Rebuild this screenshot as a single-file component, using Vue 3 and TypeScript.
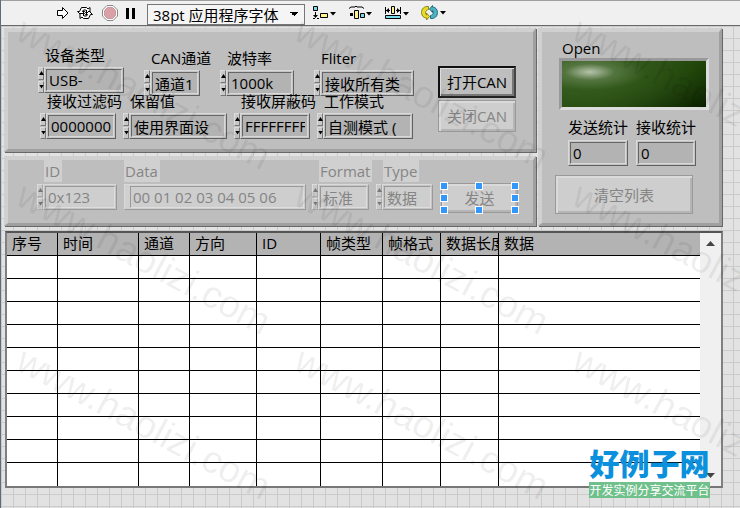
<script setup lang="ts">
interface Field {
  id: string
  label: string
  value: string
}

const deviceFields: Field[] = [
  { id: 'device', label: '设备类型', value: 'USB-' },
  { id: 'channel', label: 'CAN通道', value: '通道1' },
  { id: 'baud', label: '波特率', value: '1000k' },
  { id: 'filter', label: 'Fliter', value: '接收所有类' },
]

const filterFields: Field[] = [
  { id: 'code', label: '接收过滤码', value: '00000000' },
  { id: 'reserved', label: '保留值', value: '使用界面设' },
  { id: 'mask', label: '接收屏蔽码', value: 'FFFFFFFF' },
  { id: 'mode', label: '工作模式', value: '自测模式 (' },
]

const sendFields: Field[] = [
  { id: 'frame', label: 'ID', value: '0x123' },
  { id: 'data', label: 'Data', value: '00 01 02 03 04 05 06' },
  { id: 'format', label: 'Format', value: '标准' },
  { id: 'type', label: 'Type', value: '数据' },
]

const columns: string[] = ['序号', '时间', '通道', '方向', 'ID', '帧类型', '帧格式', '数据长度', '数据']
const handles: string[] = ['nw', 'n', 'ne', 'w', 'e', 'sw', 's', 'se']
const rowCount = 10
const markCount = 9
</script>

<template>
  <div class="window">
    <header class="toolbar">
      <button class="tool run" type="button" aria-label="Run">
        <svg width="14" height="14" viewBox="0 0 14 14"><path d="M1.5 4.5h5v-3l5.500 5.500-5.500 5.500v-3h-5z" fill="#fff" stroke="#000" /></svg>
      </button>
      <button class="tool loop" type="button" aria-label="Run continuously">
        <svg width="16" height="14" viewBox="0 0 16 14" fill="#fff" stroke="#000" stroke-linejoin="round">
          <path d="M4.500 1.500h5l1.500 1.500 2-1.500v5H8.500L10 5 9 4H6.500L5.500 5.500H7.500L4 9 .5 5.500H2.500z" />
          <path d="M11.500 12.500h-5L5 11 3 12.500v-5h4.500L6 9l1 1h2.500l1-1.500H8.500L12 5l3.500 3.500H13.500z" />
        </svg>
      </button>
      <button class="tool stop" type="button" aria-label="Abort">
        <svg width="16" height="16" viewBox="0 0 16 16">
          <path d="M5 .5h6L15.500 5v6L11 15.500H5L.5 11V5z" fill="#fff" stroke="#888" />
          <path d="M5.500 2.500h5l3 3v5l-3 3h-5l-3-3v-5z" fill="#d9a0a5" stroke="#cb999d" />
        </svg>
      </button>
      <button class="tool pause" type="button" aria-label="Pause">
        <svg width="9" height="11" viewBox="0 0 9 11"><path d="M0 0h3v11H0zM6 0h3v11H6z" /></svg>
      </button>
      <select class="font-select" aria-label="字体"><option>38pt 应用程序字体</option></select>
      <button class="tool align" type="button" aria-label="Align">
        <svg width="24" height="14" viewBox="0 0 24 14">
          <path d="M.5.5h4v4h-4z" fill="#76dce9" stroke="#000" />
          <path d="M7.500 7.500h7v4h-7z" fill="#fff38a" stroke="#000" />
          <path d="M2 6h1v3h2L2.500 12 0 9h2zM0 12h2v1H0zM4 12h2v1H4z" />
          <path d="M17 6h6l-3 3.500z" />
        </svg>
      </button>
      <button class="tool distribute" type="button" aria-label="Distribute">
        <svg width="24" height="14" viewBox="0 0 24 14">
          <path d="M0 2.500 2 1h4l1-1 1 1h5l2 1.500" fill="none" stroke="#000" />
          <path d="M1 7h3v3H1z" />
          <path d="M5.500 4.500h4v8h-4z" fill="#fff38a" stroke="#000" />
          <path d="M11.500 7.500h4v4h-4z" fill="#76dce9" stroke="#000" />
          <path d="M17 6h6l-3 3.500z" />
        </svg>
      </button>
      <button class="tool resize" type="button" aria-label="Resize">
        <svg width="24" height="14" viewBox="0 0 24 14">
          <path d="M.5 1v7M15.500 1v7M1 4.500h4M11 4.500h4" fill="none" stroke="#000" />
          <path d="m1 4.500 3-2.500v5zM15 4.500 12 2v5z" />
          <path d="M6.500.5h3v7h-3z" fill="#fff38a" stroke="#000" />
          <path d="M.5 9.500h15v3H.5z" fill="#76dce9" stroke="#000" />
          <path d="M18 6h6l-3 3.500z" />
        </svg>
      </button>
      <button class="tool reorder" type="button" aria-label="Reorder">
        <svg width="26" height="16" viewBox="0 0 26 16">
          <path d="M7.500 1.500C3 1 .5 4 .5 7.500S3 13 5.500 13v2l3-3.500-3-3.500v2C4 9.500 4 5 7.500 4.500z" fill="#eadc20" stroke="#8b8420" />
          <path d="M9.500 13.500c4.500.5 7-2.500 7-6S14 2 11.500 2V.5l-3 3.500 3 3.500v-2c1.500 0 1.500 4.500-2 5z" fill="#4db3c4" stroke="#286f7d" />
          <path d="M19 6h6l-3 3.500z" />
        </svg>
      </button>
    </header>

    <main class="canvas">
      <div class="upper">
        <div class="left">
          <section class="panel setup">
            <div class="rows">
              <div class="row first">
                <div v-for="f in deviceFields" :key="f.id" class="field" :class="f.id">
                  <label :for="f.id">{{ f.label }}</label>
                  <div class="control">
                    <span class="spin"><button type="button" aria-label="+"></button><button type="button" class="down" aria-label="-"></button></span>
                    <span class="box"><input :id="f.id" type="text" :value="f.value" /></span>
                  </div>
                </div>
              </div>
              <div class="row second">
                <div v-for="f in filterFields" :key="f.id" class="field" :class="f.id">
                  <label :for="f.id">{{ f.label }}</label>
                  <div class="control">
                    <span class="spin"><button type="button" aria-label="+"></button><button type="button" class="down" aria-label="-"></button></span>
                    <span class="box"><input :id="f.id" type="text" :value="f.value" /></span>
                  </div>
                </div>
              </div>
            </div>
            <div class="actions">
              <button class="push open" type="button">打开CAN</button>
              <button class="push" type="button" disabled>关闭CAN</button>
            </div>
          </section>

          <section class="panel sender">
            <div v-for="f in sendFields" :key="f.id" class="field muted" :class="f.id">
              <label :for="f.id">{{ f.label }}</label>
              <div class="control">
                <span v-if="f.id !== 'data'" class="spin"><button type="button" disabled aria-label="+"></button><button type="button" class="down" disabled aria-label="-"></button></span>
                <span class="box"><input :id="f.id" type="text" :value="f.value" disabled /></span>
              </div>
            </div>
            <div class="selected">
              <button class="push" type="button" disabled>发送</button>
              <i v-for="h in handles" :key="h" class="handle" :class="h"></i>
            </div>
          </section>
        </div>

        <section class="panel status">
          <div class="led-title">Open</div>
          <div class="led" role="img" aria-label="Open"></div>
          <div class="counters">
            <div class="field">
              <label for="sent">发送统计</label>
              <span class="box"><input id="sent" type="text" value="0" readonly /></span>
            </div>
            <div class="field">
              <label for="received">接收统计</label>
              <span class="box"><input id="received" type="text" value="0" readonly /></span>
            </div>
          </div>
          <button class="push clear" type="button" disabled>清空列表</button>
        </section>
      </div>

      <section class="listing">
        <table>
          <colgroup><col v-for="(c, i) in columns" :key="c" :class="'c' + i" /></colgroup>
          <thead>
            <tr><th v-for="c in columns" :key="c">{{ c }}</th></tr>
          </thead>
          <tbody>
            <tr v-for="r in rowCount" :key="r"><td v-for="c in columns" :key="c"></td></tr>
          </tbody>
        </table>
        <div class="scrollbar">
          <svg width="9" height="5" viewBox="0 0 9 5"><path d="M4.500 0 9 5H0z" fill="#444" /></svg>
          <svg width="9" height="5" viewBox="0 0 9 5"><path d="M0 0h9L4.500 5z" fill="#444" /></svg>
        </div>
      </section>
    </main>

    <div class="marks" aria-hidden="true">
      <div v-for="m in markCount" :key="m" class="mark"><span>www.haolizi.com</span></div>
    </div>
    <div class="brand">
      <strong>好例子网</strong>
      <span>开发实例分享交流平台</span>
    </div>
  </div>
</template>

<style>
body {
  margin: 0;
}
</style>

<style scoped>
* {
  box-sizing: border-box;
}
.window {
  position: relative;
  overflow: hidden;
  min-height: 100vh;
  border-left: 1px solid #5c6b80;
  font: 15px/20px "Open Sans", "Noto Sans CJK SC", sans-serif;
  color: #000;
  background-color: #e2e2e2;
  background-image: linear-gradient(90deg, #cbcbcb 1px, transparent 1px), linear-gradient(#cbcbcb 1px, transparent 1px);
  background-size: 12px 12px;
  background-position: 0 2px;
}
button, input, select {
  font: inherit;
  color: inherit;
  margin: 0;
}
.toolbar {
  display: flex;
  align-items: center;
  height: 26px;
  padding-left: 55px;
  background: #f0f0f0;
  border-top: 1px solid #a0a0a0;
  border-bottom: 1px solid #696969;
}
.tool {
  display: flex;
  flex: none;
  padding: 0;
  border: 0;
  background: none;
}
.loop { margin-left: 7px; }
.stop { margin-left: 9px; }
.pause { margin-left: 8px; }
.font-select {
  width: 158px;
  height: 21px;
  margin: 2px 8px 0 12px;
  padding: 0 5px;
  border: 1px solid #767676;
  border-radius: 0;
  appearance: none;
  background-color: #f5f5f5;
  background-image: conic-gradient(from -45deg at 50% 100%, #000 90deg, transparent 0);
  background-size: 8px 4px;
  background-repeat: no-repeat;
  background-position: right 6px center;
}
.distribute, .resize, .reorder { margin-left: 12px; }
.canvas {
  padding: 2px 17px 20px 3px;
}
.upper {
  display: flex;
  gap: 2px;
}
.left {
  display: flex;
  flex: 1;
  flex-direction: column;
  gap: 4px;
}
.panel {
  border: 4px solid;
  border-width: 4px 3px 3px 4px;
  border-color: #d0d0d0 #a0a0a0 #a0a0a0 #d0d0d0;
  background: #bebebe;
  box-shadow: 1px 1px #686868;
}
.setup {
  display: flex;
  justify-content: space-between;
  height: 124px;
}
.rows {
  display: flex;
  flex-direction: column;
}
.row {
  display: flex;
  align-items: flex-end;
}
.row.first {
  height: 64px;
  gap: 20px;
  padding-left: 30px;
}
.row.second {
  height: 43px;
  gap: 7px;
  padding-left: 32px;
}
.field label {
  display: block;
  margin-bottom: 4px;
  padding-left: 7px;
  line-height: 16px;
  white-space: nowrap;
}
.control {
  display: flex;
}
.field.device { width: 86px; padding-bottom: 3px; }
.field.channel { width: 56px; }
.field.baud { width: 74px; }
.field.filter { width: 100px; }
.field.code, .field.mask { width: 76px; }
.field.reserved { width: 104px; }
.field.mode { width: 96px; }
.spin {
  display: flex;
  flex: none;
  flex-direction: column;
  gap: 1px;
  width: 6px;
}
.spin button {
  position: relative;
  flex: 1;
  padding: 0;
  border: 1px solid;
  border-color: #dcdcdc #777 #777 #dcdcdc;
  background: #c8c8c8;
}
.spin button::after {
  content: "";
  position: absolute;
  left: 0;
  top: 3px;
  width: 5px;
  height: 4px;
  background: #000;
  clip-path: polygon(50% 0, 100% 100%, 0 100%);
}
.spin .down::after {
  clip-path: polygon(0 0, 100% 0, 50% 100%);
}
.box {
  display: block;
  flex: 1;
  min-width: 0;
  height: 26px;
  padding: 1px;
  border: 1px solid;
  border-color: #dadada #606060 #606060 #dadada;
  background: #c4c4c4;
}
.box input {
  display: block;
  width: 100%;
  height: 22px;
  padding: 0 2px;
  border: 1px solid;
  border-color: #666 #d8d8d8 #d8d8d8 #666;
  border-radius: 0;
  background: #b3b3b3;
}
.actions {
  display: flex;
  flex-direction: column;
  gap: 2px;
  width: 78px;
  margin: 34px 17px 0 0;
}
.push {
  display: block;
  width: 100%;
  height: 32px;
  padding: 0;
  border: 2px solid;
  border-color: #111 #444 #222 #111;
  border-radius: 0;
  box-shadow: inset 1px 1px #ddd, inset -2px -2px #777;
  background: #bebebe;
}
.push:disabled {
  border: 1px solid #999;
  box-shadow: inset 2px 2px #dadada, inset -2px -2px #b5b5b5;
  background: #cecece;
  color: #858585;
}
.sender {
  display: flex;
  align-items: flex-start;
  height: 70px;
  padding: 0 15px 0 29px;
}
.muted {
  color: #858585;
}
.muted label {
  width: fit-content;
  height: 22px;
  margin: 0 0 2px 7px;
  padding: 0 2px 0 1px;
  line-height: 22px;
  background: #d0d0d0;
}
.muted .box {
  border-color: #dadada #999 #999 #dadada;
}
.muted .box input {
  border-color: #999 #ddd #ddd #999;
  background: #cecece;
}
.muted .spin button::after { background: #777; }
.muted .spin button { border-color: #dcdcdc #aaa #aaa #dcdcdc; }
.frame { width: 80px; }
.data { width: 182px; margin-left: 7px; }
.data label { margin-left: 0; }
.data .box { padding-left: 5px; background: #d0d0d0; }
.format { width: 57px; margin-left: 6px; }
.type { width: 57px; margin-left: 7px; }
.selected {
  position: relative;
  width: 77px;
  margin: 23px 0 0 auto;
}
.selected .push {
  height: 30px;
}
.handle {
  position: absolute;
  width: 8px;
  height: 8px;
  border: 1px solid #fff;
  background: #3296fa;
}
.nw, .n, .ne { top: -1px; }
.w, .e { top: 11px; }
.sw, .s, .se { bottom: -1px; }
.nw, .w, .sw { left: -1px; }
.n, .s { left: 34px; }
.ne, .e, .se { right: -1px; }
.status {
  width: 184px;
  margin-right: 1px;
  padding: 6px 10px 0 13px;
}
.led-title {
  padding-left: 7px;
}
.led {
  height: 52px;
  margin: 0 0 9px 4px;
  border: 3px solid;
  border-color: #999 #ddd #ddd #999;
  background:
    radial-gradient(ellipse 55px 18px at 28px 11px, #b6c3aa, rgba(112, 139, 94, 0.5) 45%, transparent),
    radial-gradient(ellipse 120px 60px at 30px 12px, #3a6123, transparent),
    linear-gradient(160deg, #31581a, #1d4207 55%, #0c2201);
}
.counters {
  display: flex;
  gap: 8px;
  padding-left: 13px;
}
.counters .field {
  width: 60px;
}
.counters label {
  margin-bottom: 5px;
  padding: 0;
}
.clear {
  width: 138px;
  height: 39px;
  margin-top: 9px;
}
.listing {
  display: flex;
  margin: 5px 0 0 1px;
  border: 2px solid;
  border-color: #555 #808080 #777 #808080;
  background: #f0f0f0;
}
table {
  flex: 1;
  width: 100px;
  table-layout: fixed;
  border-collapse: separate;
  border-spacing: 0;
  background: #fff;
}
th, td {
  height: 23px;
  padding: 0;
  border-right: 1px solid #000;
  border-bottom: 1px solid #000;
}
th:last-child, td:last-child { border-right: 0; }
tbody tr:last-child td { border-bottom: 0; }
th {
  padding-left: 5px;
  overflow: hidden;
  background: #b3b3b3;
  font-weight: 400;
  line-height: 20px;
  text-align: left;
  vertical-align: top;
  white-space: nowrap;
}
.c0, .c2 { width: 51px; }
.c1 { width: 81px; }
.c3 { width: 67px; }
.c4 { width: 64px; }
.c5 { width: 62px; }
.c6, .c7 { width: 58px; }
.scrollbar {
  display: flex;
  flex-direction: column;
  justify-content: space-between;
  align-items: center;
  width: 21px;
  padding: 8px 0;
}
.marks {
  position: absolute;
  inset: 6px 0 0 10px;
  display: grid;
  grid-template-columns: repeat(3, 278px);
  grid-auto-rows: 165px;
  pointer-events: none;
}
.mark span {
  display: block;
  width: max-content;
  font: 38px/38px "Liberation Sans", sans-serif;
  color: rgba(0, 0, 0, 0.08);
  transform: rotate(28deg);
  transform-origin: 0 38px;
}
.brand {
  position: absolute;
  right: 30px;
  bottom: 10px;
  width: 121px;
  text-align: center;
  white-space: nowrap;
}
.brand strong {
  display: block;
  margin-bottom: 4px;
  font: 900 30px/32px "Noto Sans CJK SC", sans-serif;
  color: #0a90dc;
}
.brand span {
  display: block;
  height: 16px;
  font: 12px/16px "Noto Sans CJK SC", sans-serif;
  color: #fff;
  background: #70c08c;
}
</style>
